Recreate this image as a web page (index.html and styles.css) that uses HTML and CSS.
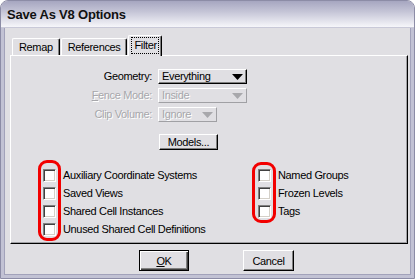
FILE: index.html
```html
<!DOCTYPE html>
<html>
<head>
<meta charset="utf-8">
<link rel="stylesheet" href="styles.css">
</head>
<body>
<div class="window">
  <div class="titlebar"><span class="title">Save As V8 Options</span></div>
  <div class="client">
    <div class="tabs">
      <div class="tab">Remap</div>
      <div class="tab">References</div>
      <div class="tab active"><span class="focus">Filter</span></div>
    </div>
    <div class="panel">
      <div class="form">
        <span class="lbl">Geometry:</span>
        <div class="combo wide"><span>Everything</span><svg class="arrow" width="11" height="6" viewBox="0 0 11 6"><polygon points="0,0 11,0 5.5,6" fill="#000"/></svg></div>
        <span class="lbl disabled"><u>F</u>ence Mode:</span>
        <div class="combo wide disabled"><span>Inside</span><svg class="arrow" width="11" height="6" viewBox="0 0 11 6"><polygon points="0,0 11,0 5.5,6" fill="#a8a8ac"/></svg></div>
        <span class="lbl disabled">Clip Volume:</span>
        <div class="combo narrow disabled"><span>Ignore</span><svg class="arrow" width="11" height="6" viewBox="0 0 11 6"><polygon points="0,0 11,0 5.5,6" fill="#a8a8ac"/></svg></div>
        <span></span>
        <div class="models"><span class="btn models-btn">Models...</span></div>
      </div>
      <div class="checks">
        <div class="col">
          <span class="ring ring-left"></span>
          <div class="row"><span class="box"></span><span class="text">Auxiliary Coordinate Systems</span></div>
          <div class="row"><span class="box"></span><span class="text">Saved Views</span></div>
          <div class="row"><span class="box"></span><span class="text">Shared Cell Instances</span></div>
          <div class="row"><span class="box"></span><span class="text">Unused Shared Cell Definitions</span></div>
        </div>
        <div class="col">
          <span class="ring ring-right"></span>
          <div class="row"><span class="box"></span><span class="text">Named Groups</span></div>
          <div class="row"><span class="box"></span><span class="text">Frozen Levels</span></div>
          <div class="row"><span class="box"></span><span class="text">Tags</span></div>
        </div>
      </div>
    </div>
    <div class="actions">
      <span class="btn default"><u>O</u>K</span>
      <span class="btn cancel">Cancel</span>
    </div>
  </div>
</div>
</body>
</html>
```

FILE: styles.css
```css
html, body {
  margin: 0;
  padding: 0;
  background: #ffffff;
}
body {
  font-family: "Liberation Sans", Arial, sans-serif;
  font-size: 11px;
  letter-spacing: -0.35px;
  color: #000;
}
.window {
  width: 415px;
  height: 279px;
  box-sizing: border-box;
  border: 1px solid #8c8ca6;
  border-radius: 8px 8px 0 0;
  background: #e0dfe3;
  overflow: hidden;
  display: flex;
  flex-direction: column;
}
.titlebar {
  height: 26px;
  flex: none;
  border-bottom: 1px solid #c9c9d8;
  background: linear-gradient(#a6a6c0 0%, #c4c4d6 40%, #eeeef4 90%, #f6f6fa 100%);
  display: flex;
  align-items: center;
  padding-left: 6px;
}
.title {
  font-weight: bold;
  font-size: 13px;
  letter-spacing: -0.2px;
  color: #111;
  padding-top: 1px;
}
.client {
  flex: 1;
  border-style: solid;
  border-width: 0 3px 3px 3px;
  border-color: #c2c2d4;
  box-shadow: inset 1px 0 #a2a2ba, inset -1px -1px #a2a2ba;
  padding: 7px 3px 0 6px;
  display: flex;
  flex-direction: column;
}
.tabs {
  display: flex;
  align-items: flex-end;
  padding-left: 2px;
  height: 20px;
  gap: 1px;
}
.tab {
  height: 17px;
  box-sizing: border-box;
  padding: 0 6px;
  border-top: 1px solid #fff;
  border-left: 1px solid #fff;
  border-right: 1px solid #000;
  box-shadow: inset -1px 0 #808080;
  border-radius: 2px 2px 0 0;
  display: flex;
  align-items: center;
  background: #e0dfe3;
}
.tab.active {
  height: 21px;
  margin-bottom: -1px;
  position: relative;
  z-index: 1;
  padding: 0 3px 2px 3px;
}
.focus {
  outline: 1px dotted #000;
  padding: 1px 1px 1px 2px;
  line-height: 13px;
}
.panel {
  height: 189px;
  box-sizing: border-box;
  border-top: 1px solid #fff;
  border-left: 1px solid #fff;
  border-right: 1px solid #000;
  border-bottom: 1px solid #000;
  box-shadow: inset -1px -1px #a0a0a4;
  padding-top: 13px;
  width: 398px;
}
.form {
  display: grid;
  grid-template-columns: 141px auto;
  column-gap: 6px;
  row-gap: 4px;
  align-items: center;
  justify-items: start;
}
.lbl {
  justify-self: end;
  line-height: 15px;
}
.disabled {
  color: #a7a7ab;
  text-shadow: 1px 1px 0 #fff;
}
.combo {
  height: 15px;
  box-sizing: border-box;
  border-style: solid;
  border-width: 1px;
  border-color: #fff #000 #000 #fff;
  box-shadow: inset -1px -1px #808080;
  display: flex;
  align-items: center;
  justify-content: space-between;
  padding: 0 3px 0 3px;
  line-height: 13px;
}
.combo.wide { width: 89px; }
.combo.narrow { width: 59px; }
.combo.disabled { border-color: #fff #a0a0a4 #a0a0a4 #fff; box-shadow: none; }
.arrow { display: block; }
.models {
  margin-top: 8px;
  padding-left: 1px;
}
.btn {
  display: flex;
  align-items: center;
  justify-content: center;
  box-sizing: border-box;
  border-style: solid;
  border-width: 1px;
  border-color: #fff #000 #000 #fff;
  box-shadow: inset -1px -1px #808080;
  background: #e0dfe3;
}
.models-btn {
  width: 59px;
  height: 16px;
}
.checks {
  display: grid;
  grid-template-columns: 215px auto;
  padding-left: 32px;
  margin-top: 17px;
}
.col {
  position: relative;
  display: flex;
  flex-direction: column;
}
.row {
  display: flex;
  align-items: flex-start;
  height: 18px;
  gap: 7px;
}
.text {
  line-height: 17px;
}
.box {
  width: 13px;
  height: 13px;
  margin-top: 2px;
  box-sizing: border-box;
  background: #fff;
  border-style: solid;
  border-width: 1px;
  border-color: #808080 #fff #fff #808080;
  box-shadow: inset 1px 1px #404040, inset -1px -1px #d4d0c8;
  flex: none;
}
.ring {
  position: absolute;
  box-sizing: border-box;
  border: 3px solid #f20000;
  border-radius: 9px;
  z-index: 2;
}
.ring-left {
  left: -5px;
  top: -7px;
  width: 23px;
  height: 81px;
}
.ring-right {
  left: -6px;
  top: -5px;
  width: 24px;
  height: 61px;
}
.actions {
  display: flex;
  padding-top: 6px;
  padding-left: 129px;
  gap: 54px;
}
.btn.default {
  width: 50px;
  height: 21px;
  border: 1px solid #000;
  box-shadow: inset 1px 1px #fff, inset -1px -1px #404040, inset -2px -2px #808080;
}
.btn.cancel {
  width: 51px;
  height: 21px;
}
```
